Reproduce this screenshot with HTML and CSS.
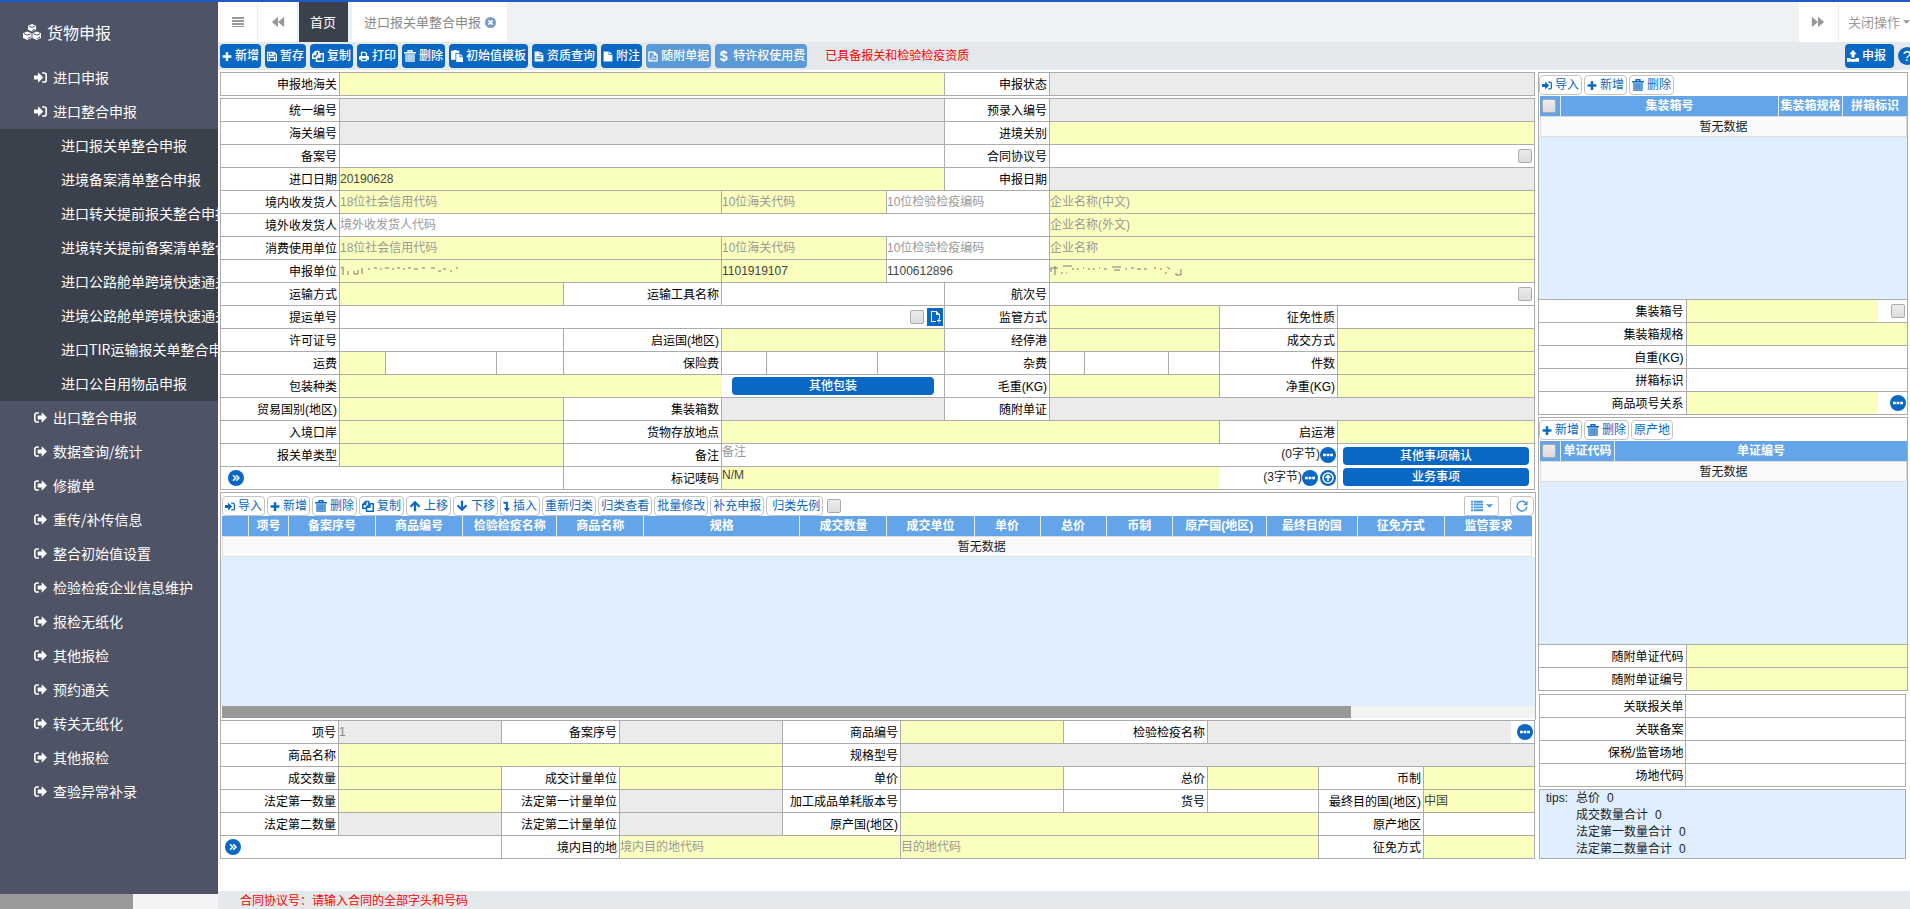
FILE: index.html
```html
<!DOCTYPE html>
<html lang="zh-CN">
<head>
<meta charset="utf-8">
<title>货物申报</title>
<link rel="stylesheet" href="styles.css">
</head>
<body>
<svg class="sprite" aria-hidden="true">
  <symbol id="signin" viewBox="0 0 16 16"><path d="M0 5.500h5V1.500L11.500 8 5 14.500v-4H0z"/><path class="ln" d="M10 2.500h2.500a2.500 2.500 0 0 1 2.500 2.500v6a2.500 2.500 0 0 1-2.500 2.500H10"/></symbol>
  <symbol id="signout" viewBox="0 0 16 16"><path class="ln" d="M6 2.500H3.500A2.500 2.500 0 0 0 1 5v6a2.500 2.500 0 0 0 2.500 2.500H6"/><path d="M4.500 5.500h5v-4L16 8l-6.500 6.500v-4h-5z"/></symbol>
  <symbol id="cubes" viewBox="0 0 18 16"><path d="M9 0l4 1.700v4L9 7.600 5 5.700v-4zM4.300 7.400l4.200 1.800V14l-4.200 2L0 14V9.200zM13.700 7.400L18 9.200V14l-4.300 2-4.200-2V9.200z"/><path class="cut" d="M6 2.200l3 1.200 3-1.200M9.300 6.300l2.700-1.300M1 9.700l3.300 1.400 3.200-1.400M10.500 9.700l3.200 1.400L17 9.700M4.700 14.500l2.800-1.300M14.200 14.500l2.800-1.300"/></symbol>
  <symbol id="bars" viewBox="0 0 14 14"><path d="M1 2h12v2H1zM1 5h12v2H1zM1 8h12v2H1zM1 11h12v1H1z"/></symbol>
  <symbol id="backward" viewBox="0 0 16 16"><path d="M8 2v12L1 8zM15 2v12L8 8z"/></symbol>
  <symbol id="forward" viewBox="0 0 16 16"><path d="M1 2v12l7-6zM8 2v12l7-6z"/></symbol>
  <symbol id="close" viewBox="0 0 16 16"><circle cx="8" cy="8" r="8"/><path class="inv heavy" d="M5 5l6 6M11 5l-6 6"/></symbol>
  <symbol id="plus" viewBox="0 0 16 16"><path d="M6 1h4v5h5v4h-5v5H6v-5H1V6h5z"/></symbol>
  <symbol id="save" viewBox="0 0 16 16"><path class="ln" d="M1 1.500h10.500l3.500 3.500v9.500H1zM4 1.500V6h7V1.500M4 14.500V9.500h8v5"/><path d="M7.500 2h2v3h-2z"/></symbol>
  <symbol id="copy" viewBox="0 0 16 16"><path class="ln" d="M6 11H1V6l4-4h4v3M5 2v4H1M6 15h9V5h-4.500L6 9.500zM10.500 5v4.500H6"/></symbol>
  <symbol id="print" viewBox="0 0 16 16"><path class="ln" d="M4 8V1.500h6L12 3.500V8M4 11v3.500h8V11"/><path d="M2 7h12q2 0 2 2v4h-3v-2H3v2H0V9q0-2 2-2z"/></symbol>
  <symbol id="trash" viewBox="0 0 16 16"><path class="ln" d="M0 3.500h16M5.500 3V1h5v2"/><path d="M2 5h12v10H2z" opacity=".5"/><path class="thin" d="M2.500 5v10.500h11V5M5.500 6v8M8 6v8M10.500 6v8"/></symbol>
  <symbol id="paste" viewBox="0 0 16 16"><path d="M0 1h3.500V0h4v1H11v3H6v9H0z"/><path d="M7 5h4.500v4.500H16V16H7zM12.500 5L16 8.500h-3.500z"/></symbol>
  <symbol id="filetext" viewBox="0 0 16 16"><path d="M1 0h8v5.500h6V16H1zM10 0l5 4.500h-5z"/><path class="hole" d="M4 8.500h8M4 11.500h8"/></symbol>
  <symbol id="file" viewBox="0 0 16 16"><path d="M1 0h8v5.500h6V16H1zM10 0l5 4.500h-5z"/></symbol>
  <symbol id="pdf" viewBox="0 0 16 16"><path class="ln" d="M1.500 1H10l4.500 4.500V15h-13zM10 1v4.500h4.500"/><path class="thin" d="M4 13c2-2 4-5 3.500-8M7.500 7c.5 2 2 4 4.500 4-3-.5-5 0-8 2"/></symbol>
  <symbol id="upload" viewBox="0 0 16 16"><path d="M8 0l5 5.500h-3V10H6V5.500H3zM0 10.500h4.500V12h7v-1.500H16V15.500H0z"/></symbol>
  <symbol id="up" viewBox="0 0 16 16"><path d="M8 1l7 7-2 2-3.500-3.500V15h-3V6.500L3 10 1 8z"/></symbol>
  <symbol id="down" viewBox="0 0 16 16"><path d="M8 15L1 8l2-2 3.500 3.500V1h3v8.500L13 6l2 2z"/></symbol>
  <symbol id="level" viewBox="0 0 10 16"><path d="M0 1h7v9h3l-4.500 5.500L1 10h3V4H1z"/></symbol>
  <symbol id="dots" viewBox="0 0 16 16"><circle cx="8" cy="8" r="8"/><path fill="#fff" d="M3 6.700h2.800v2.600H3zM6.600 6.700h2.800v2.600H6.600zM10.200 6.700H13v2.600h-2.800z"/></symbol>
  <symbol id="more" viewBox="0 0 16 16"><circle cx="8" cy="8" r="8"/><path class="inv" d="M5 5.200L7.800 8 5 10.800M8.200 5.200L11 8l-2.800 2.800"/></symbol>
  <symbol id="circleup" viewBox="0 0 16 16"><circle cx="8" cy="8" r="8"/><circle class="inv" cx="8" cy="8" r="5"/><path class="inv" d="M8 11V5.500M5.500 8L8 5.500 10.500 8"/></symbol>
  <symbol id="list" viewBox="0 0 16 16"><path d="M0 1h3v2.500H0zM4 1h12v2.500H4zM0 4.800h3v2.500H0zM4 4.800h12v2.500H4zM0 8.600h3v2.500H0zM4 8.600h12v2.500H4zM0 12.400h3v2.500H0zM4 12.400h12v2.500H4z"/></symbol>
  <symbol id="caret" viewBox="0 0 8 4"><path d="M0 0h8L4 4z"/></symbol>
  <symbol id="refresh" viewBox="0 0 16 16"><path class="ln" d="M13.500 4.500A6.500 6.500 0 1 0 14.500 9"/><path d="M15.500 1v6h-6z"/></symbol>
  <symbol id="newdoc" viewBox="0 0 16 18"><path fill="#fff" d="M4 3h5.500L13 6.500V11h-1V7H9V4H5v9h4v1H4zM10 12h1.500v-1.500h1V12H14v1h-1.500v1.500h-1V13H10z"/></symbol>
</svg>

<div class="app">
  <nav class="side">
    <h1><svg class="i18"><use href="#cubes"/></svg>货物申报</h1>
    <ul>
      <li><a href="#"><svg class="nav-icon"><use href="#signin"/></svg>进口申报</a></li>
      <li><a href="#"><svg class="nav-icon"><use href="#signin"/></svg>进口整合申报</a>
        <ul class="sub">
          <li><a href="#">进口报关单整合申报</a></li>
          <li><a href="#">进境备案清单整合申报</a></li>
          <li><a href="#">进口转关提前报关整合申报</a></li>
          <li><a href="#">进境转关提前备案清单整合申报</a></li>
          <li><a href="#">进口公路舱单跨境快速通关</a></li>
          <li><a href="#">进境公路舱单跨境快速通关</a></li>
          <li><a href="#">进口TIR运输报关单整合申报</a></li>
          <li><a href="#">进口公自用物品申报</a></li>
        </ul>
      </li>
      <li><a href="#"><svg class="nav-icon"><use href="#signout"/></svg>出口整合申报</a></li>
      <li><a href="#"><svg class="nav-icon"><use href="#signout"/></svg>数据查询/统计</a></li>
      <li><a href="#"><svg class="nav-icon"><use href="#signout"/></svg>修撤单</a></li>
      <li><a href="#"><svg class="nav-icon"><use href="#signout"/></svg>重传/补传信息</a></li>
      <li><a href="#"><svg class="nav-icon"><use href="#signout"/></svg>整合初始值设置</a></li>
      <li><a href="#"><svg class="nav-icon"><use href="#signout"/></svg>检验检疫企业信息维护</a></li>
      <li><a href="#"><svg class="nav-icon"><use href="#signout"/></svg>报检无纸化</a></li>
      <li><a href="#"><svg class="nav-icon"><use href="#signout"/></svg>其他报检</a></li>
      <li><a href="#"><svg class="nav-icon"><use href="#signout"/></svg>预约通关</a></li>
      <li><a href="#"><svg class="nav-icon"><use href="#signout"/></svg>转关无纸化</a></li>
      <li><a href="#"><svg class="nav-icon"><use href="#signout"/></svg>其他报检</a></li>
      <li><a href="#"><svg class="nav-icon"><use href="#signout"/></svg>查验异常补录</a></li>
    </ul>
    <div class="sidebar-scroll"><div class="thumb"></div></div>
  </nav>

  <main class="main">
    <header class="tabs">
      <button class="sq" aria-label="菜单"><svg class="i14"><use href="#bars"/></svg></button>
      <button class="sq" aria-label="向左"><svg class="i14"><use href="#backward"/></svg></button>
      <a class="tab home" href="#">首页</a>
      <a class="tab doc" href="#">进口报关单整合申报<svg class="closer"><use href="#close"/></svg></a>
      <button class="sq end" aria-label="向右"><svg class="i14"><use href="#forward"/></svg></button>
      <button class="closeops">关闭操作<svg class="caret"><use href="#caret"/></svg></button>
    </header>

    <div class="bar">
      <button class="btn"><svg class="i11"><use href="#plus"/></svg>新增</button>
      <button class="btn"><svg class="i11"><use href="#save"/></svg>暂存</button>
      <button class="btn"><svg class="i13"><use href="#copy"/></svg>复制</button>
      <button class="btn"><svg class="i11"><use href="#print"/></svg>打印</button>
      <button class="btn"><svg class="i13"><use href="#trash"/></svg>删除</button>
      <button class="btn"><svg class="i13"><use href="#paste"/></svg>初始值模板</button>
      <button class="btn"><svg class="i11"><use href="#filetext"/></svg>资质查询</button>
      <button class="btn"><svg class="i11"><use href="#file"/></svg>附注</button>
      <button class="btn off"><svg class="i11"><use href="#pdf"/></svg>随附单据</button>
      <button class="btn off"><span class="usd">$</span>特许权使用费</button>
      <span class="qual">已具备报关和检验检疫资质</span>
      <button class="btn declare"><svg class="i13"><use href="#upload"/></svg>申报</button>
      <button class="help" aria-label="帮助">?</button>
    </div>

    <div class="work">
      <div class="left">
        <div class="form head">
          <label for="a1">申报地海关</label><input id="a1" class="req s8">
          <label for="a2">申报状态</label><input id="a2" class="ro s5" readonly>
        </div>
        <div class="form head">
          <label for="b1">统一编号</label><input id="b1" class="ro s8" readonly>
          <label for="b2">预录入编号</label><input id="b2" class="ro s5" readonly>

          <label for="b3">海关编号</label><input id="b3" class="ro s8" readonly>
          <label for="b4">进境关别</label><input id="b4" class="req s5">

          <label for="b5">备案号</label><input id="b5" class="s8">
          <label for="b6">合同协议号</label><div class="cell s5"><input id="b6"><input type="checkbox" aria-label="保留合同协议号"></div>

          <label for="b7">进口日期</label><input id="b7" class="req s8" value="20190628">
          <label for="b8">申报日期</label><input id="b8" class="ro s5" readonly>

          <label for="b9">境内收发货人</label><input id="b9" class="req s4" placeholder="18位社会信用代码"><input class="req s3" aria-label="海关代码" placeholder="10位海关代码"><input class="s2" aria-label="检验检疫编码" placeholder="10位检验检疫编码"><input class="req s5" aria-label="企业名称" placeholder="企业名称(中文)">

          <label for="b10">境外收发货人</label><input id="b10" class="s9" placeholder="境外收发货人代码"><input class="req s5" aria-label="企业名称外文" placeholder="企业名称(外文)">

          <label for="b11">消费使用单位</label><input id="b11" class="req s4" placeholder="18位社会信用代码"><input class="req s3" aria-label="海关代码" placeholder="10位海关代码"><input class="s2" aria-label="检验检疫编码" placeholder="10位检验检疫编码"><input class="req s5" aria-label="企业名称" placeholder="企业名称">

          <label for="b12">申报单位</label><div class="cell req s4"><svg class="smudge" viewBox="0 0 132 14"><path d="M3 3v8M1 4l2-1M8 7v4M14 7v3h4V6M22 4v6M28 5h2M34 4h3M40 5h2M45 4h4M52 5h2M57 4h3M63 5h2M68 4h3M74 5h4M82 4h3M91 4h4M98 7h3M103 5h3M110 7h2M116 4h2"/></svg><input id="b12"></div><input class="req s3" aria-label="海关代码" value="1101919107"><input class="s2" aria-label="检验检疫编码" value="1100612896"><div class="cell req s5"><svg class="smudge" viewBox="0 0 132 14"><path d="M1 4v4M1 4h7M5 2v9M13 2h9M11 9h2M16 9h1M22 5h2M27 5h2M33 4h1M38 5h2M43 5h2M49 4h1M54 5h3M62 3h9M64 6h6M75 5h2M81 4h3M87 5h4M94 5h3M104 4h2M110 5h2M117 3l3 2M115 9h2M126 9v2h5V5"/></svg><input aria-label="企业名称"></div>

          <label for="b13">运输方式</label><input id="b13" class="req s3">
          <label for="b14">运输工具名称</label><input id="b14" class="s4">
          <label for="b15">航次号</label><div class="cell s5"><input id="b15"><input type="checkbox" aria-label="保留航次号"></div>

          <label for="b16">提运单号</label><div class="cell s8"><input id="b16"><input type="checkbox" aria-label="保留提运单号"><button class="newdoc" aria-label="新建"><svg><use href="#newdoc"/></svg></button></div>
          <label for="b17">监管方式</label><input id="b17" class="req s3">
          <label for="b18">征免性质</label><input id="b18">

          <label for="b19">许可证号</label><input id="b19" class="s3">
          <label for="b20">启运国(地区)</label><input id="b20" class="req s4">
          <label for="b21">经停港</label><input id="b21" class="req s3">
          <label for="b22">成交方式</label><input id="b22" class="req">

          <label for="b23">运费</label><input id="b23" class="req"><input aria-label="运费金额"><input aria-label="运费币制">
          <label for="b24">保险费</label><input id="b24"><input aria-label="保险费金额"><input class="s2" aria-label="保险费币制">
          <label for="b25">杂费</label><input id="b25"><input aria-label="杂费金额"><input aria-label="杂费币制">
          <label for="b26">件数</label><input id="b26" class="req">

          <label for="b27">包装种类</label><input id="b27" class="req joined s4"><div class="cell pad s4"><button class="wide">其他包装</button></div>
          <label for="b28">毛重(KG)</label><input id="b28" class="req s3">
          <label for="b29">净重(KG)</label><input id="b29" class="req">

          <label for="b30">贸易国别(地区)</label><input id="b30" class="req s3">
          <label for="b31">集装箱数</label><input id="b31" class="ro s4" readonly>
          <label for="b32">随附单证</label><input id="b32" class="ro s5" readonly>

          <label for="b33">入境口岸</label><input id="b33" class="req s3">
          <label for="b34">货物存放地点</label><input id="b34" class="req s8">
          <label for="b35">启运港</label><input id="b35" class="req">

          <label for="b36">报关单类型</label><input id="b36" class="req s3">
          <label for="b37">备注</label><div class="cell s9"><textarea id="b37" placeholder="备注"></textarea><span class="count">(0字节)</span><button class="ic" aria-label="更多"><svg class="i16"><use href="#dots"/></svg></button></div>
          <div class="stack"><button class="wide">其他事项确认</button><button class="wide">业务事项</button></div>

          <div class="cell s4"><button class="ic expand" aria-label="展开"><svg class="i16"><use href="#more"/></svg></button></div>
          <label for="b38">标记唛码</label><div class="marks s9"><textarea id="b38">N/M</textarea><div class="aside"><span class="count">(3字节)</span><button class="ic" aria-label="更多"><svg class="i16"><use href="#dots"/></svg></button><button class="ic" aria-label="上传"><svg class="i16"><use href="#circleup"/></svg></button></div></div>
        </div>

        <section class="panel goods">
          <div class="tools">
            <button><svg class="i11"><use href="#signin"/></svg>导入</button>
            <button><svg class="i11"><use href="#plus"/></svg>新增</button>
            <button><svg class="i13"><use href="#trash"/></svg>删除</button>
            <button><svg class="i13"><use href="#copy"/></svg>复制</button>
            <button><svg class="i13"><use href="#up"/></svg>上移</button>
            <button><svg class="i13"><use href="#down"/></svg>下移</button>
            <button><svg class="level"><use href="#level"/></svg>插入</button>
            <button>重新归类</button>
            <button>归类查看</button>
            <button>批量修改</button>
            <button>补充申报</button>
            <button class="last">归类先例</button>
            <input type="checkbox" aria-label="归类先例">
            <button class="cols" aria-label="列"><svg class="i13"><use href="#list"/></svg><svg class="caret"><use href="#caret"/></svg></button>
            <button class="reload" aria-label="刷新"><svg class="i13"><use href="#refresh"/></svg></button>
          </div>
          <table>
            <colgroup><col class="w27"><col class="w40"><col class="w87"><col class="w87"><col class="w94"><col class="w87"><col class="w156"><col class="w87"><col class="w87"><col class="w66"><col class="w66"><col class="w66"><col class="w94"><col class="w91"><col class="w87"><col class="w87"></colgroup>
            <thead><tr><th></th><th>项号</th><th>备案序号</th><th>商品编号</th><th>检验检疫名称</th><th>商品名称</th><th>规格</th><th>成交数量</th><th>成交单位</th><th>单价</th><th>总价</th><th>币制</th><th>原产国(地区)</th><th>最终目的国</th><th>征免方式</th><th>监管要求</th></tr></thead>
            <tbody><tr><td colspan="16">暂无数据</td></tr></tbody>
          </table>
          <div class="void"></div>
          <div class="hscroll"><div class="thumb"></div></div>
        </section>

        <div class="form item">
          <label for="c1">项号</label><input id="c1" class="ro" value="1" readonly>
          <label for="c2">备案序号</label><input id="c2" class="ro" readonly>
          <label for="c3">商品编号</label><input id="c3" class="req">
          <label for="c4">检验检疫名称</label><div class="cell s3"><input id="c4" class="ro" readonly><div class="slot"><button class="ic" aria-label="更多"><svg class="i16"><use href="#dots"/></svg></button></div></div>

          <label for="c5">商品名称</label><input id="c5" class="req s3">
          <label for="c6">规格型号</label><input id="c6" class="ro s5" readonly>

          <label for="c7">成交数量</label><input id="c7" class="req">
          <label for="c8">成交计量单位</label><input id="c8" class="req">
          <label for="c9">单价</label><input id="c9" class="req">
          <label for="c10">总价</label><input id="c10" class="req">
          <label for="c11">币制</label><input id="c11" class="req">

          <label for="c12">法定第一数量</label><input id="c12" class="req">
          <label for="c13">法定第一计量单位</label><input id="c13" class="ro" readonly>
          <label for="c14">加工成品单耗版本号</label><input id="c14">
          <label for="c15">货号</label><input id="c15">
          <label for="c16">最终目的国(地区)</label><input id="c16" class="req" value="中国">

          <label for="c17">法定第二数量</label><input id="c17" class="ro" readonly>
          <label for="c18">法定第二计量单位</label><input id="c18" class="ro" readonly>
          <label for="c19">原产国(地区)</label><input id="c19" class="req s3">
          <label for="c20">原产地区</label><input id="c20">

          <div class="cell s2"><button class="ic expand2" aria-label="展开"><svg class="i16"><use href="#more"/></svg></button></div>
          <label for="c21">境内目的地</label><input id="c21" class="req s2" placeholder="境内目的地代码"><input class="req s3" aria-label="目的地代码" placeholder="目的地代码">
          <label for="c22">征免方式</label><input id="c22" class="req">
        </div>
      </div>

      <div class="right">
        <section class="panel">
          <div class="tools">
            <button><svg class="i11"><use href="#signin"/></svg>导入</button>
            <button><svg class="i11"><use href="#plus"/></svg>新增</button>
            <button><svg class="i13"><use href="#trash"/></svg>删除</button>
          </div>
          <table>
            <colgroup><col class="w21"><col class="w218"><col class="w64"><col class="w64"></colgroup>
            <thead><tr><th><input type="checkbox" aria-label="全选"></th><th>集装箱号</th><th>集装箱规格</th><th>拼箱标识</th></tr></thead>
            <tbody><tr><td colspan="4">暂无数据</td></tr></tbody>
          </table>
          <div class="void tall"></div>
        </section>
        <div class="form pair">
          <label for="d1">集装箱号</label><div class="cell"><input id="d1" class="req"><div class="slot wider"><input type="checkbox" aria-label="保留集装箱号"></div></div>
          <label for="d2">集装箱规格</label><input id="d2" class="req">
          <label for="d3">自重(KG)</label><input id="d3">
          <label for="d4">拼箱标识</label><input id="d4">
          <label for="d5">商品项号关系</label><div class="cell"><input id="d5" class="req"><div class="slot wider"><button class="ic" aria-label="更多"><svg class="i16"><use href="#dots"/></svg></button></div></div>
        </div>
        <section class="panel second">
          <div class="tools">
            <button><svg class="i11"><use href="#plus"/></svg>新增</button>
            <button><svg class="i13"><use href="#trash"/></svg>删除</button>
            <button>原产地</button>
          </div>
          <table>
            <colgroup><col class="w21"><col class="w54"><col class="w292"></colgroup>
            <thead><tr><th><input type="checkbox" aria-label="全选"></th><th>单证代码</th><th>单证编号</th></tr></thead>
            <tbody><tr><td colspan="3">暂无数据</td></tr></tbody>
          </table>
          <div class="void tall"></div>
        </section>
        <div class="form pair">
          <label for="e1">随附单证代码</label><input id="e1" class="req">
          <label for="e2">随附单证编号</label><input id="e2" class="req">
        </div>
        <div class="form pair inset">
          <label for="f1">关联报关单</label><input id="f1">
          <label for="f2">关联备案</label><input id="f2">
          <label for="f3">保税/监管场地</label><input id="f3">
          <label for="f4">场地代码</label><input id="f4">
        </div>
        <div class="tips">
          <span>tips:</span>
          <ul>
            <li>总价<b>0</b></li>
            <li>成交数量合计<b>0</b></li>
            <li>法定第一数量合计<b>0</b></li>
            <li>法定第二数量合计<b>0</b></li>
          </ul>
        </div>
      </div>
    </div>

    <footer>合同协议号：请输入合同的全部字头和号码</footer>
  </main>
</div>
</body>
</html>
```

FILE: styles.css
```css
* { box-sizing: border-box; }

body {
  margin: 0;
  background: #fff;
  color: #222;
  font: 12px/18px "Liberation Sans", "Noto Sans CJK SC", sans-serif;
}

ul { margin: 0; padding: 0; list-style: none; }
a { color: inherit; text-decoration: none; }
button, input, textarea { margin: 0; border: 0; padding: 0; font: inherit; color: inherit; }
button { background: none; white-space: nowrap; }

svg { flex: none; fill: currentColor; }
.sprite { position: absolute; width: 0; height: 0; }
.ln { fill: none; stroke: currentColor; stroke-width: 2; }
.thin { fill: none; stroke: currentColor; stroke-width: 1; }
.inv { fill: none; stroke: #fff; stroke-width: 1.5; }
.heavy { stroke-width: 2.5; }
.hole { fill: none; stroke: #0a68c5; stroke-width: 1.5; }
.cut { fill: none; stroke: #4e5366; stroke-width: 1; }
.i11 { width: 10px; height: 11px; }
.i13 { width: 12px; height: 12px; }
.i14 { width: 14px; height: 14px; }
.i16 { width: 16px; height: 16px; }
.i18 { width: 18px; height: 16px; }
.nav-icon { width: 13px; height: 13px; }
.caret { width: 7px; height: 4px; }
.level { width: 7px; height: 11px; }

.app {
  display: flex;
  min-height: 100vh;
  border-top: 2px solid #2159c8;
}

/* Navigation */
.side {
  display: flex;
  flex-direction: column;
  flex: none;
  width: 218px;
  overflow: hidden;
  background: #4e5366;
  color: #fff;
  font: 14px/32px "Noto Sans CJK SC", sans-serif;
}
.side h1 {
  display: flex;
  align-items: center;
  gap: 6px;
  height: 59px;
  margin: 0;
  padding-left: 23px;
  font-size: 16px;
  font-weight: 400;
}
.side a {
  display: flex;
  align-items: center;
  gap: 6px;
  height: 34px;
  padding: 0 0 2px 34px;
  white-space: nowrap;
}
.side .sub { background: #3a404c; }
.side .sub a { padding-left: 61px; }
.sidebar-scroll { height: 15px; margin-top: auto; background: #f4f4f6; }
.sidebar-scroll .thumb { width: 61%; height: 100%; background: #999; }

.main {
  display: flex;
  flex-direction: column;
  flex: 1;
  min-width: 0;
  overflow: hidden;
}

/* Tab strip */
.tabs {
  display: flex;
  height: 40px;
  background: #eef2f4;
  color: #999;
  font: 13px/32px "Noto Sans CJK SC", sans-serif;
}
.sq {
  display: flex;
  align-items: center;
  justify-content: center;
  width: 40px;
  border-right: 1px solid #eee;
  background: #fff;
}
.tab { display: flex; align-items: center; background: #fff; }
.home { margin-left: 1px; padding: 0 12px 0 11px; background: #3a404c; color: #fff; }
.doc { gap: 4px; margin-left: 4px; padding: 0 11px 0 12px; color: #888; }
.closer { width: 11px; height: 11px; color: #7b9bc4; }
.end { margin-left: auto; }
.closeops {
  display: flex;
  align-items: center;
  gap: 3px;
  padding-left: 9px;
  background: #fff;
}

/* Action bar */
.bar {
  display: flex;
  align-items: center;
  gap: 4px;
  height: 28px;
  padding-left: 2px;
  background: #e5e9ec;
}
.btn {
  display: flex;
  align-items: center;
  gap: 3px;
  height: 24px;
  padding: 0 2px;
  border-radius: 4px;
  background: #0a68c5;
  color: #fff;
  font-weight: 500;
}
.btn.off { background: #5a9ad6; }
.usd { width: 13px; font-size: 14px; font-weight: 700; text-align: center; }
.qual { margin-left: 14px; color: #f00; }
.declare { margin-left: auto; padding-right: 8px; }
.help {
  flex: none;
  width: 18px;
  height: 18px;
  margin-right: -6px;
  border-radius: 50%;
  background: #0a68c5;
  color: #fff;
  font-size: 15px;
}

/* Work area */
.work {
  display: grid;
  grid-template-columns: 1316fr 370fr;
  gap: 2px;
  padding: 2px 2px 32px;
}
.left, .right { min-width: 0; }

.form {
  display: grid;
  grid-auto-rows: 23px;
  border: 1px solid #acacac;
  border-width: 1px 0 0 1px;
}
.head, .item { margin-right: 1px; }
.head {
  grid-template-columns:
    minmax(0, 119fr) minmax(0, 46fr) minmax(0, 111fr) minmax(0, 67fr) minmax(0, 158fr)
    minmax(0, 45fr) minmax(0, 111fr) minmax(0, 9fr) minmax(0, 58fr) minmax(0, 105fr)
    minmax(0, 35fr) minmax(0, 84fr) minmax(0, 51fr) minmax(0, 118fr) minmax(0, 197fr);
  margin-bottom: 2px;
}
.item {
  grid-template-columns:
    minmax(0, 118fr) minmax(0, 163fr) minmax(0, 118fr) minmax(0, 163fr) minmax(0, 118fr)
    minmax(0, 163fr) minmax(0, 144fr) minmax(0, 111fr) minmax(0, 105fr) minmax(0, 111fr);
}
.pair { grid-template-columns: minmax(0, 148fr) minmax(0, 222fr); }
.inset { margin: 3px 2px 2px 1px; }

.form > * {
  min-width: 0;
  border: 1px solid #acacac;
  border-width: 0 1px 1px 0;
}
.form label {
  padding: 3px 2px 0 0;
  color: #000;
  text-align: right;
  white-space: nowrap;
}
.form input, .form textarea {
  width: 100%;
  border-radius: 0;
  background: #fff;
  color: #444;
  padding: 0 0 1px;
  outline: 0;
}
.form textarea { height: 22px; resize: none; overflow: hidden; line-height: 16px; }
::placeholder { color: #999; opacity: 1; }
.form .req { background: #faffbd; }
.form .ro { background: #ebebeb; color: #888; }
.form > .joined { border-right: 0; }
.s2 { grid-column: span 2; }
.s3 { grid-column: span 3; }
.s4 { grid-column: span 4; }
.s5 { grid-column: span 5; }
.s8 { grid-column: span 8; }
.s9 { grid-column: span 9; }

.cell { display: flex; align-items: center; }
.cell > input:not([type="checkbox"]) { flex: 1; min-width: 0; height: 22px; }
.cell.req > input { background: transparent; }
.pad { padding: 0 10px; }
.count { margin-top: -2px; line-height: 18px; white-space: nowrap; }
.slot { display: flex; justify-content: flex-end; flex: none; width: 23px; }
.slot.wider { width: 29px; }

.form input[type="checkbox"], .tools input, th input {
  flex: none;
  appearance: none;
  width: 14px;
  height: 14px;
  margin: 0 2px;
  padding: 0;
  border: 1px solid #aaa;
  border-radius: 2px;
  background: linear-gradient(#ececec, #dcdcdc);
}
.newdoc { width: 16px; height: 18px; margin: 0 1px; background: #0a68c5; }
.newdoc svg { display: block; width: 16px; height: 18px; }
.ic { display: flex; flex: none; margin-right: 1px; color: #0a68c5; }
.expand { margin-left: 7px; }
.expand2 { margin-left: 4px; }
.smudge { width: 132px; height: 14px; fill: none; stroke: #777; stroke-width: 1; }

.wide {
  width: 100%;
  height: 18px;
  border-radius: 4px;
  background: #0a68c5;
  color: #fff;
  font-weight: 500;
  line-height: 18px;
}
.stack {
  display: flex;
  flex-direction: column;
  justify-content: center;
  gap: 3px;
  grid-row: span 2;
  padding: 0 5px;
}
.marks { display: grid; grid-template-columns: 498fr 118fr; }
.marks textarea { background: #faffbd; }
.aside { display: flex; align-items: center; justify-content: flex-end; }
.aside .ic + .ic { margin-left: 1px; }

/* Record lists */
.panel { border: 1px solid #acacac; border-bottom: 0; padding-top: 2px; }
.goods { padding: 3px 0 2px; }
.second { margin-top: 2px; }
.tools {
  display: flex;
  align-items: center;
  gap: 2px;
  height: 21px;
  padding: 0 0 1px;
}
.goods .tools { height: 20px; padding: 0 1px; }
.tools button {
  display: flex;
  align-items: center;
  gap: 3px;
  height: 20px;
  padding: 0 2px;
  border: 1px solid #c4c4c4;
  border-radius: 4px;
  color: #0a68c5;
}
.tools .last { padding-left: 5px; }
.tools .cols {
  justify-content: center;
  width: 35px;
  margin-left: auto;
  margin-right: 9px;
  border-radius: 2px;
  color: #4c97de;
}
.tools .reload { justify-content: center; width: 24px; color: #4c97de; }

table {
  width: calc(100% - 2px);
  margin-left: 1px;
  border-spacing: 0;
  table-layout: fixed;
}
.goods table { width: calc(100% - 4px); }
th {
  height: 20px;
  padding: 0;
  border-right: 1px solid #dfefff;
  background: #64a5e9;
  color: #fff;
  font-weight: 700;
  line-height: 18px;
  white-space: nowrap;
}
th:last-child { border-right: 0; }
th input { display: block; }
td {
  height: 21px;
  padding: 0;
  border: 1px solid #ddd;
  background: #fafafa;
  line-height: 16px;
  text-align: center;
}
.goods td { padding-left: 16%; }
.void { height: 149px; background: #dfefff; }
.void.tall { height: 162px; }
.hscroll { height: 12px; margin-left: 1px; background: #f3f3f3; }
.hscroll .thumb { width: 86%; height: 100%; background: #999; }

.w21 { width: 21px; }
.w27 { width: 27px; }
.w40 { width: 40px; }
.w54 { width: 54px; }
.w64 { width: 64px; }
.w66 { width: 66px; }
.w87 { width: 87px; }
.w91 { width: 91px; }
.w94 { width: 94px; }
.w156 { width: 156px; }
.w218 { width: 218px; }
.w292 { width: 292px; }

.tips {
  display: flex;
  gap: 8px;
  margin: 0 2px 0 1px;
  padding: 0 6px;
  border: 1px solid #acacac;
  background: #dfefff;
  line-height: 17px;
}
.tips b { margin-left: 7px; font-weight: 400; }

footer {
  margin-top: auto;
  height: 18px;
  padding-left: 22px;
  background: #e5e9ec;
  color: #f00;
  line-height: 20px;
}
```
